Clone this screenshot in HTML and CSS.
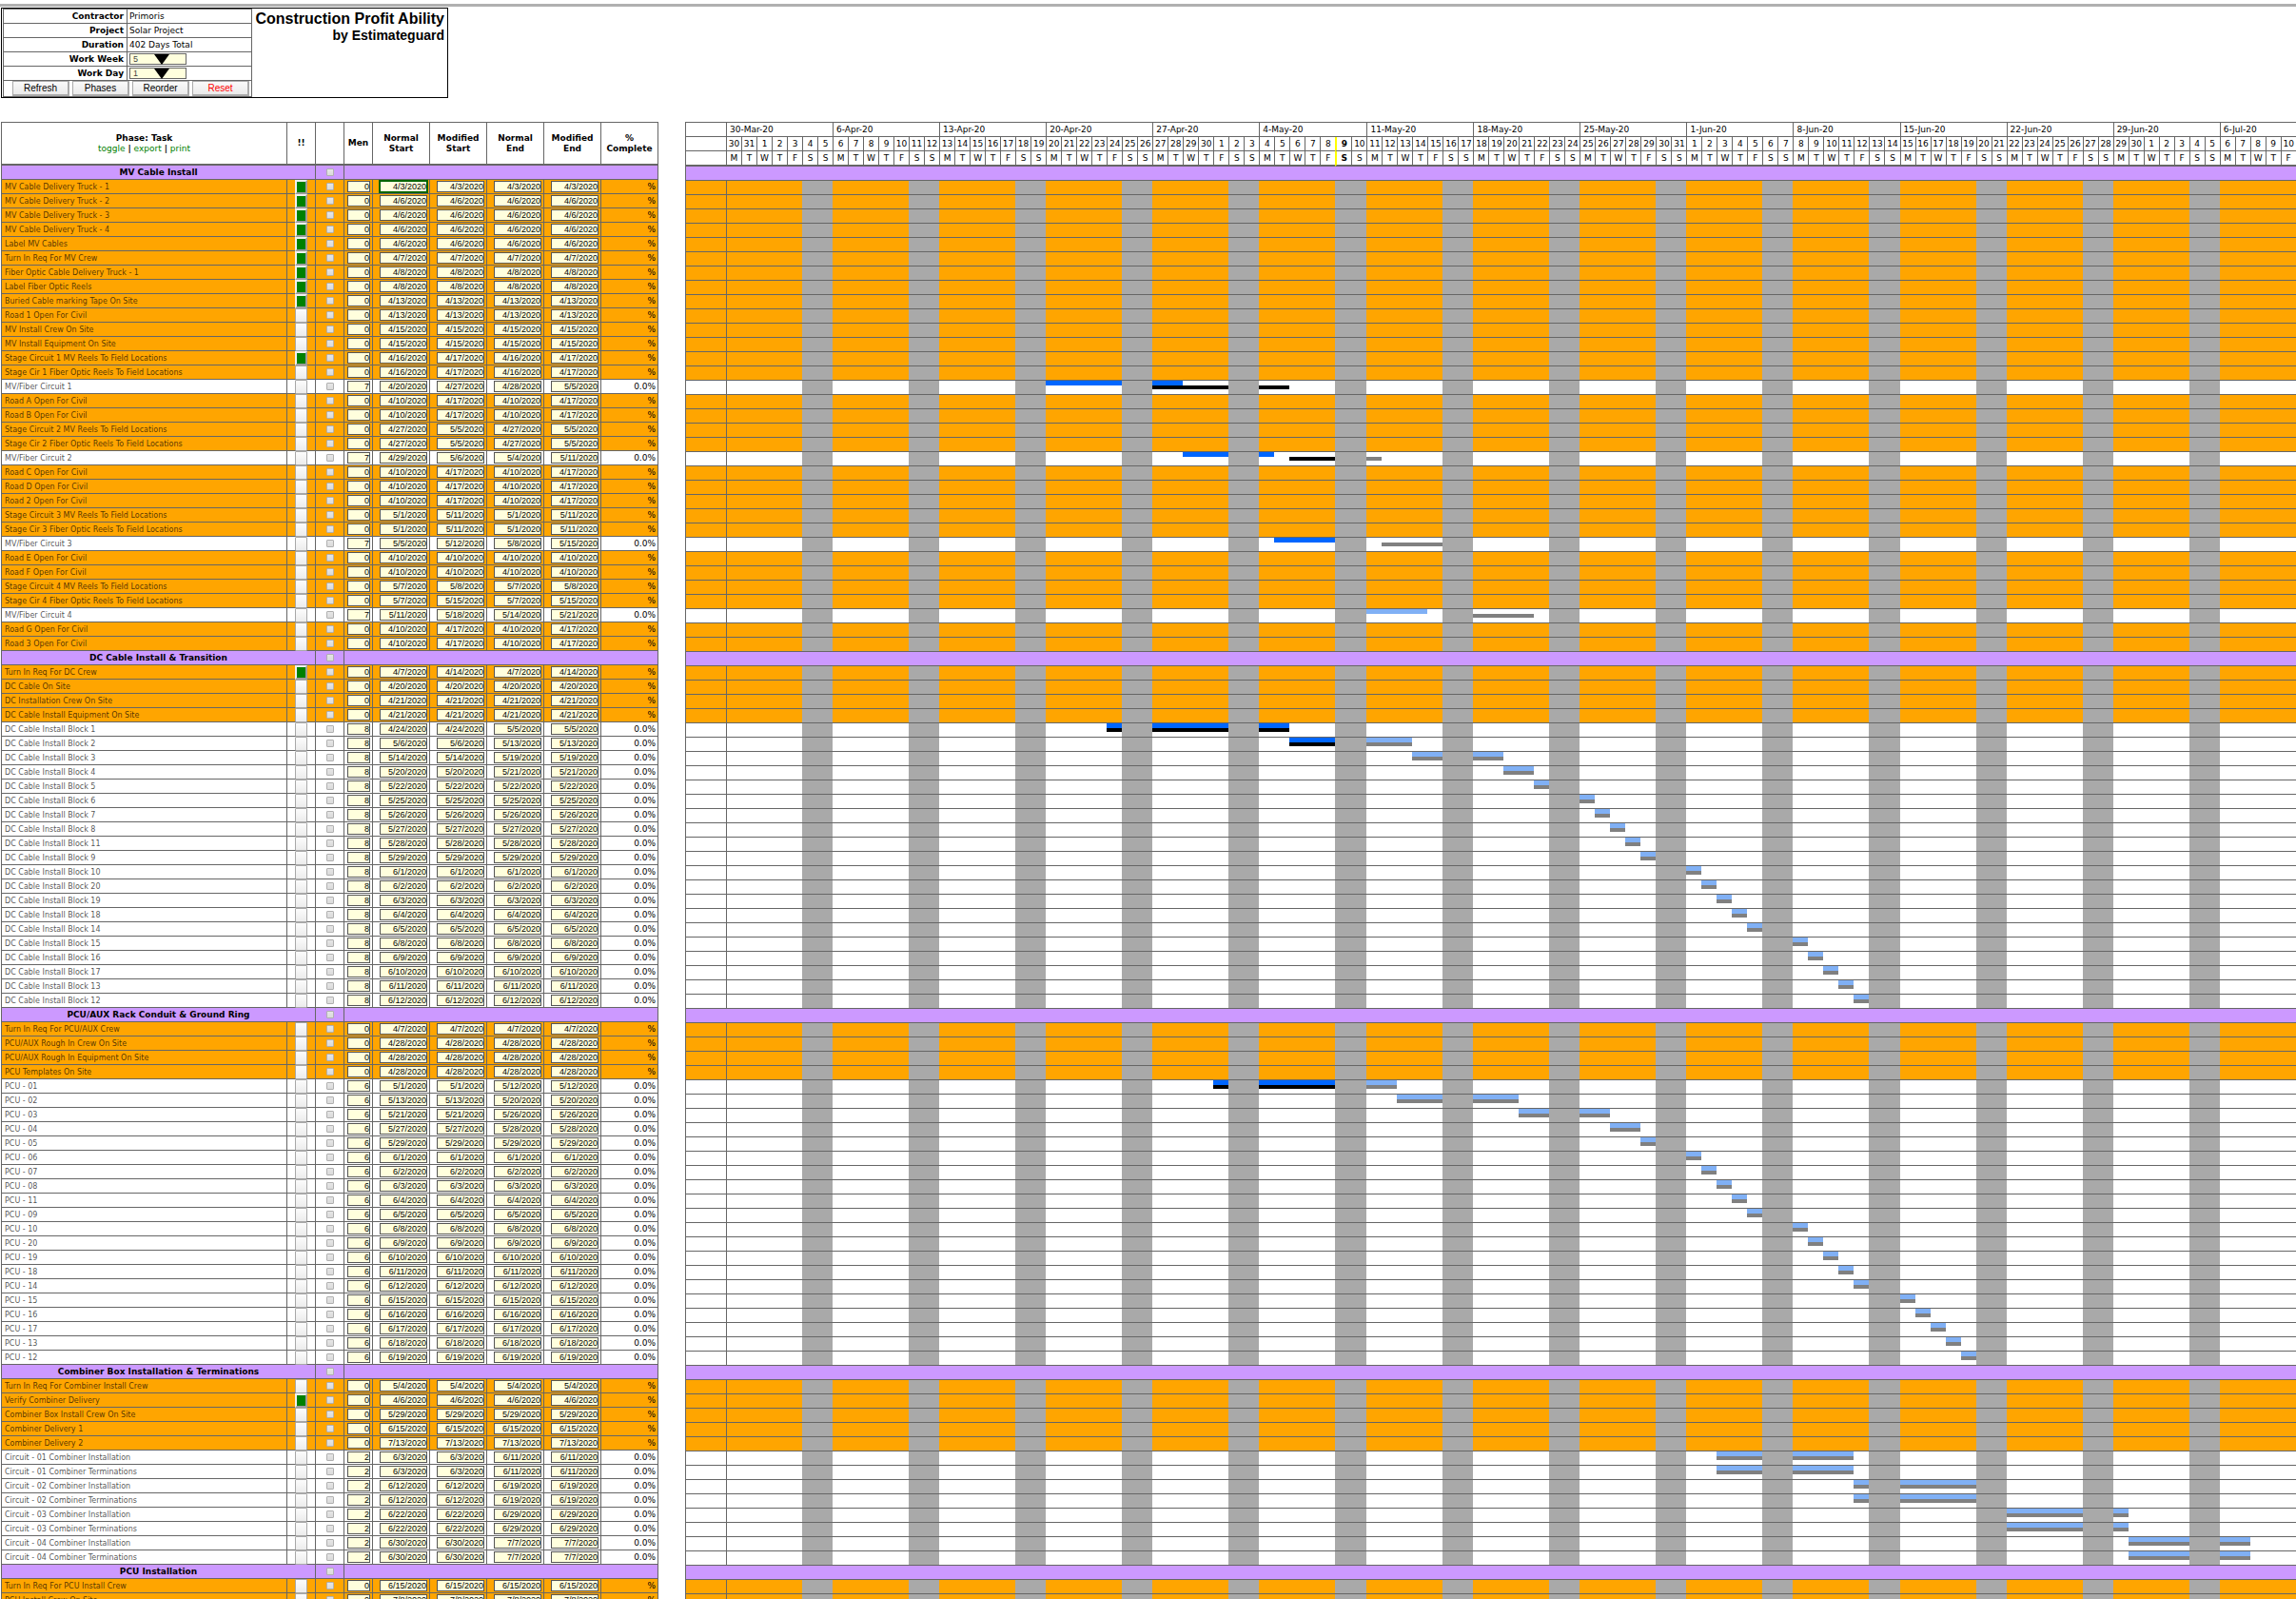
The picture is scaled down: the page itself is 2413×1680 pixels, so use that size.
FILE: index.html
```html
<!DOCTYPE html>
<html lang="en">
<head>
<meta charset="utf-8">
<title>Construction Profit Ability by Estimateguard</title>
<link rel="stylesheet" href="styles.css">
</head>
<body>
<header class="summary">
  <table class="project">
    <tbody>
      <tr><th scope="row">Contractor</th><td>Primoris</td></tr>
      <tr><th scope="row">Project</th><td>Solar Project</td></tr>
      <tr><th scope="row">Duration</th><td>402 Days Total</td></tr>
      <tr><th scope="row"><label for="week">Work Week</label></th><td><span class="picker"><select id="week"><option>5</option><option>6</option><option>7</option></select></span></td></tr>
      <tr><th scope="row"><label for="day">Work Day</label></th><td><span class="picker"><select id="day"><option>1</option><option>2</option></select></span></td></tr>
      <tr class="actions"><td colspan="2"><div class="buttons">
        <button type="button">Refresh</button>
        <button type="button">Phases</button>
        <button type="button">Reorder</button>
        <button type="button" class="danger">Reset</button>
      </div></td></tr>
    </tbody>
  </table>
  <div class="brand">
    <h1>Construction Profit Ability</h1>
    <p>by Estimateguard</p>
  </div>
</header>
<main class="schedule">
  <table class="tasks">
    <colgroup><col class="c-task"><col class="c-small"><col class="c-small"><col class="c-small"><col class="c-date"><col class="c-date"><col class="c-date"><col class="c-date"><col class="c-date"></colgroup>
    <thead>
      <tr>
        <th scope="col">Phase: Task<br><span class="links"><a href="#toggle">toggle</a> <b>|</b> <a href="#export">export</a> <b>|</b> <a href="#print">print</a></span></th>
        <th scope="col">!!</th>
        <td></td>
        <th scope="col">Men</th>
        <th scope="col">Normal<br>Start</th>
        <th scope="col">Modified<br>Start</th>
        <th scope="col">Normal<br>End</th>
        <th scope="col">Modified<br>End</th>
        <th scope="col">%<br>Complete</th>
      </tr>
    </thead>
    <tbody id="task-rows"></tbody>
  </table>
  <div class="chart">
    <table class="gantt" id="gantt"></table>
  </div>
</main>
<script src="schedule.js"></script>
</body>
</html>
```
FILE: styles.css
```css
* { box-sizing: border-box; }

html, body { height: 100%; }

body {
  margin: 0;
  overflow: hidden;
  background: #fff;
  color: #000;
  font: 9px/11px "DejaVu Sans", Verdana, sans-serif;
}

body::before {
  content: "";
  display: block;
  height: 3px;
  margin: 4px 0 1px;
  background: #b0b0b0;
}

table { border-collapse: separate; border-spacing: 0; table-layout: fixed; }
th, td { padding: 0; overflow: hidden; white-space: nowrap; }

/* Project summary */
.summary {
  display: flex;
  justify-content: space-between;
  width: 470px;
  margin: 0 0 25px 1px;
  padding: 0 3px 0 1px;
  border: 1px solid #000;
}
.project { width: 262px; border: 1px solid #666; border-bottom: 0; }
.project th, .project td { height: 15px; border-bottom: 1px solid #666; }
.project th { width: 130px; padding-right: 3px; text-align: right; border-right: 1px solid #666; }
.project td { padding-left: 2px; }
.project .actions td { height: 17px; padding: 0 2px 0 0; }
.buttons { display: flex; justify-content: flex-end; gap: 3px; }
.buttons button {
  width: 60px;
  height: 16px;
  padding: 0;
  border: 1px solid #aaa;
  border-width: 1px 2px 2px 1px;
  background: linear-gradient(#fafafa, #eaeaea);
  color: #000;
  font: 10px/12px "Liberation Sans", Arial, sans-serif;
}
.buttons .danger { color: #f00; }

.picker { display: block; position: relative; width: 60px; height: 12px; }
.picker select {
  display: block;
  appearance: none;
  width: 60px;
  height: 12px;
  margin: 0;
  padding: 0 0 0 3px;
  border: 1px solid #666;
  border-radius: 0;
  background: #ffffdd;
  color: #444;
  font: 9px/10px "Liberation Sans", Arial, sans-serif;
}
.picker::after {
  content: "";
  position: absolute;
  top: 1px;
  left: 26px;
  width: 16px;
  height: 11px;
  background: #000;
  clip-path: polygon(0 0, 100% 0, 50% 100%);
  pointer-events: none;
}

.brand { padding-top: 2px; text-align: right; font-family: "Liberation Sans", Arial, sans-serif; }
.brand h1 { margin: 0; font-size: 16px; line-height: 18px; }
.brand p { margin: 0; font-size: 14px; line-height: 16px; font-weight: bold; }

/* Task table */
.schedule { display: flex; align-items: flex-start; gap: 28px; margin-left: 1px; }
.tasks { flex: none; width: 691px; border-top: 1px solid #666; border-left: 1px solid #666; }
.c-task { width: 300px; }
.c-small { width: 30px; }
.c-date { width: 60px; }
.tasks th, .tasks td { height: 15px; border-right: 1px solid #666; border-bottom: 1px solid #666; }
.tasks thead th, .tasks thead td { height: 45px; border-bottom-width: 2px; }
.links { font-weight: normal; }
.links a { color: #008000; text-decoration: none; }

.phase th, .phase td { background: #cc99ff; }
.phase th { text-align: center; }
.milestone th, .milestone td { background: #ffa500; }
.tasks .name {
  padding-left: 3px;
  color: rgba(0, 0, 0, 0.7);
  font-size: 8px;
  font-weight: normal;
  text-align: left;
}
.tasks .percent { padding-right: 2px; text-align: right; }
.tasks .flag-cell { overflow: visible; vertical-align: top; }
.flag {
  display: block;
  width: 13px;
  height: 15px;
  margin: 0 auto -1px;
  padding: 0;
  border: 1px solid #a8a8a8;
  border-radius: 1px;
  background: linear-gradient(#fcfcfc, #ececec);
}
.flag.done { border: 2px outset #f0f0f0; border-radius: 0; background: #008000; }

.tasks input { display: block; }
.tasks input[type="checkbox"] {
  appearance: none;
  width: 8px;
  height: 8px;
  margin: 0 auto;
  border: 1px solid #b0b0b0;
  border-radius: 1px;
  background: linear-gradient(#e6e6e6, #dadada);
}
.tasks input[type="text"] {
  width: 50px;
  height: 12px;
  margin: 0 2px 0 auto;
  padding: 0;
  border: 1px solid #555;
  background: #ffffdd;
  color: #000;
  font: 9px/10px "Liberation Sans", Arial, sans-serif;
  text-align: right;
}
.tasks input.men { width: 24px; }
.tasks input.current { outline: 2px solid #006400; outline-offset: -1px; }

/* Calendar chart */
.chart { flex: 1; min-width: 0; overflow: hidden; }
.gantt { border-top: 1px solid #666; border-left: 1px solid #666; }
.gantt .c-lead { width: 42px; }
.gantt .c-day { width: 16px; }
.gantt .c-today { width: 17px; }
.gantt th, .gantt td { height: 15px; border-bottom: 1px solid #666; }
.gantt th { border-left: 1px solid #666; font-weight: normal; text-align: center; }
.gantt th.week { padding-left: 3px; text-align: left; }
.gantt .weekdays th, .gantt .weekdays td { height: 16px; border-bottom-width: 2px; }
.gantt th.today { border-left: 2px solid #ff0; font-weight: bold; }
.gantt .first { border-left: 1px solid #666; }
.gantt td.off { background: #a9a9a9; }
.gantt td.run { vertical-align: top; }
.bar { display: block; height: 4px; }
.bar.normal { height: 5px; }
.bar.normal.past { background: #0066ff; }
.bar.normal.ahead { background: #80b0f5; }
.bar.modified.past { background: #000; }
.bar.modified.ahead { background: #808080; }
```
FILE: schedule.js
```js
// One task per line: name | men | normal start | modified start | normal end | modified end | done.
// A line starting with "#" opens a phase. Tasks without men are milestones.
const plan = `
# MV Cable Install
MV Cable Delivery Truck - 1|0|4/3|4/3|4/3|4/3|x
MV Cable Delivery Truck - 2|0|4/6|4/6|4/6|4/6|x
MV Cable Delivery Truck - 3|0|4/6|4/6|4/6|4/6|x
MV Cable Delivery Truck - 4|0|4/6|4/6|4/6|4/6|x
Label MV Cables|0|4/6|4/6|4/6|4/6|x
Turn In Req For MV Crew|0|4/7|4/7|4/7|4/7|x
Fiber Optic Cable Delivery Truck - 1|0|4/8|4/8|4/8|4/8|x
Label Fiber Optic Reels|0|4/8|4/8|4/8|4/8|x
Buried Cable marking Tape On Site|0|4/13|4/13|4/13|4/13|x
Road 1 Open For Civil|0|4/13|4/13|4/13|4/13
MV Install Crew On Site|0|4/15|4/15|4/15|4/15
MV Install Equipment On Site|0|4/15|4/15|4/15|4/15
Stage Circuit 1 MV Reels To Field Locations|0|4/16|4/17|4/16|4/17|x
Stage Cir 1 Fiber Optic Reels To Field Locations|0|4/16|4/17|4/16|4/17
MV/Fiber Circuit 1|7|4/20|4/27|4/28|5/5
Road A Open For Civil|0|4/10|4/17|4/10|4/17
Road B Open For Civil|0|4/10|4/17|4/10|4/17
Stage Circuit 2 MV Reels To Field Locations|0|4/27|5/5|4/27|5/5
Stage Cir 2 Fiber Optic Reels To Field Locations|0|4/27|5/5|4/27|5/5
MV/Fiber Circuit 2|7|4/29|5/6|5/4|5/11
Road C Open For Civil|0|4/10|4/17|4/10|4/17
Road D Open For Civil|0|4/10|4/17|4/10|4/17
Road 2 Open For Civil|0|4/10|4/17|4/10|4/17
Stage Circuit 3 MV Reels To Field Locations|0|5/1|5/11|5/1|5/11
Stage Cir 3 Fiber Optic Reels To Field Locations|0|5/1|5/11|5/1|5/11
MV/Fiber Circuit 3|7|5/5|5/12|5/8|5/15
Road E Open For Civil|0|4/10|4/10|4/10|4/10
Road F Open For Civil|0|4/10|4/10|4/10|4/10
Stage Circuit 4 MV Reels To Field Locations|0|5/7|5/8|5/7|5/8
Stage Cir 4 Fiber Optic Reels To Field Locations|0|5/7|5/15|5/7|5/15
MV/Fiber Circuit 4|7|5/11|5/18|5/14|5/21
Road G Open For Civil|0|4/10|4/17|4/10|4/17
Road 3 Open For Civil|0|4/10|4/17|4/10|4/17
# DC Cable Install & Transition
Turn In Req For DC Crew|0|4/7|4/14|4/7|4/14|x
DC Cable On Site|0|4/20|4/20|4/20|4/20
DC Installation Crew On Site|0|4/21|4/21|4/21|4/21
DC Cable Install Equipment On Site|0|4/21|4/21|4/21|4/21
DC Cable Install Block 1|8|4/24|4/24|5/5|5/5
DC Cable Install Block 2|8|5/6|5/6|5/13|5/13
DC Cable Install Block 3|8|5/14|5/14|5/19|5/19
DC Cable Install Block 4|8|5/20|5/20|5/21|5/21
DC Cable Install Block 5|8|5/22|5/22|5/22|5/22
DC Cable Install Block 6|8|5/25|5/25|5/25|5/25
DC Cable Install Block 7|8|5/26|5/26|5/26|5/26
DC Cable Install Block 8|8|5/27|5/27|5/27|5/27
DC Cable Install Block 11|8|5/28|5/28|5/28|5/28
DC Cable Install Block 9|8|5/29|5/29|5/29|5/29
DC Cable Install Block 10|8|6/1|6/1|6/1|6/1
DC Cable Install Block 20|8|6/2|6/2|6/2|6/2
DC Cable Install Block 19|8|6/3|6/3|6/3|6/3
DC Cable Install Block 18|8|6/4|6/4|6/4|6/4
DC Cable Install Block 14|8|6/5|6/5|6/5|6/5
DC Cable Install Block 15|8|6/8|6/8|6/8|6/8
DC Cable Install Block 16|8|6/9|6/9|6/9|6/9
DC Cable Install Block 17|8|6/10|6/10|6/10|6/10
DC Cable Install Block 13|8|6/11|6/11|6/11|6/11
DC Cable Install Block 12|8|6/12|6/12|6/12|6/12
# PCU/AUX Rack Conduit & Ground Ring
Turn In Req For PCU/AUX Crew|0|4/7|4/7|4/7|4/7
PCU/AUX Rough In Crew On Site|0|4/28|4/28|4/28|4/28
PCU/AUX Rough In Equipment On Site|0|4/28|4/28|4/28|4/28
PCU Templates On Site|0|4/28|4/28|4/28|4/28
PCU - 01|6|5/1|5/1|5/12|5/12
PCU - 02|6|5/13|5/13|5/20|5/20
PCU - 03|6|5/21|5/21|5/26|5/26
PCU - 04|6|5/27|5/27|5/28|5/28
PCU - 05|6|5/29|5/29|5/29|5/29
PCU - 06|6|6/1|6/1|6/1|6/1
PCU - 07|6|6/2|6/2|6/2|6/2
PCU - 08|6|6/3|6/3|6/3|6/3
PCU - 11|6|6/4|6/4|6/4|6/4
PCU - 09|6|6/5|6/5|6/5|6/5
PCU - 10|6|6/8|6/8|6/8|6/8
PCU - 20|6|6/9|6/9|6/9|6/9
PCU - 19|6|6/10|6/10|6/10|6/10
PCU - 18|6|6/11|6/11|6/11|6/11
PCU - 14|6|6/12|6/12|6/12|6/12
PCU - 15|6|6/15|6/15|6/15|6/15
PCU - 16|6|6/16|6/16|6/16|6/16
PCU - 17|6|6/17|6/17|6/17|6/17
PCU - 13|6|6/18|6/18|6/18|6/18
PCU - 12|6|6/19|6/19|6/19|6/19
# Combiner Box Installation & Terminations
Turn In Req For Combiner Install Crew|0|5/4|5/4|5/4|5/4
Verify Combiner Delivery|0|4/6|4/6|4/6|4/6|x
Combiner Box Install Crew On Site|0|5/29|5/29|5/29|5/29
Combiner Delivery 1|0|6/15|6/15|6/15|6/15
Combiner Delivery 2|0|7/13|7/13|7/13|7/13
Circuit - 01 Combiner Installation|2|6/3|6/3|6/11|6/11
Circuit - 01 Combiner Terminations|2|6/3|6/3|6/11|6/11
Circuit - 02 Combiner Installation|2|6/12|6/12|6/19|6/19
Circuit - 02 Combiner Terminations|2|6/12|6/12|6/19|6/19
Circuit - 03 Combiner Installation|2|6/22|6/22|6/29|6/29
Circuit - 03 Combiner Terminations|2|6/22|6/22|6/29|6/29
Circuit - 04 Combiner Installation|2|6/30|6/30|7/7|7/7
Circuit - 04 Combiner Terminations|2|6/30|6/30|7/7|7/7
# PCU Installation
Turn In Req For PCU Install Crew|0|6/15|6/15|6/15|6/15
PCU Install Crew On Site|0|7/8|7/8|7/8|7/8
`.trim().split("\n");

const YEAR = 2020;
const DAY_MS = 86400000;
const FIRST_DAY = Date.UTC(YEAR, 2, 30);
const DAY_COUNT = 105;
const MONTHS = ["Jan", "Feb", "Mar", "Apr", "May", "Jun", "Jul"];
const LETTERS = "MTWTFSS";

const dayIndex = (text) => {
  const [month, day] = text.split("/").map(Number);
  return (Date.UTC(YEAR, month - 1, day) - FIRST_DAY) / DAY_MS;
};
const TODAY = dayIndex("5/9");
const isOff = (day) => day % 7 > 4;
const escape = (text) => text.replace("&", "&amp;");

const tasks = plan.map((line) => {
  if (line.startsWith("#")) return { phase: escape(line.slice(2)) };
  const [name, men, normalStart, modifiedStart, normalEnd, modifiedEnd, done] = line.split("|");
  return { name, men: Number(men), dates: [normalStart, modifiedStart, normalEnd, modifiedEnd], done: Boolean(done) };
});

const dateLabels = ["normal start", "modified start", "normal end", "modified end"];

function taskRow(task, index) {
  if (task.phase) {
    return `<tr class="phase"><th colspan="2" scope="rowgroup">${task.phase}</th>
      <td><input type="checkbox" aria-label="Select phase ${task.phase}"></td><td colspan="6"></td></tr>`;
  }
  const dates = task.dates.map((date, i) => {
    const current = index === 1 && i === 0 ? ' class="current"' : "";
    return `<td><input type="text"${current} value="${date}/${YEAR}" aria-label="${task.name} ${dateLabels[i]}"></td>`;
  }).join("");
  return `<tr class="${task.men ? "work" : "milestone"}"><th scope="row" class="name">${task.name}</th>
    <td class="flag-cell"><button type="button" class="flag${task.done ? " done" : ""}" aria-label="Flag ${task.name}"></button></td>
    <td><input type="checkbox" aria-label="Select ${task.name}"></td>
    <td><input type="text" class="men" value="${task.men}" aria-label="${task.name} men"></td>${dates}
    <td class="percent">${task.men ? "0.0%" : "%"}</td></tr>`;
}

function barState(task, day) {
  if (isOff(day)) return "off";
  if (!task.men) return "";
  const [ns, ms, ne, me] = task.dates.map(dayIndex);
  const normal = day >= ns && day <= ne;
  const modified = day >= ms && day <= me;
  if (!normal && !modified) return "";
  return `${normal ? "n" : "-"}${modified ? "m" : "-"}${day < TODAY ? "past" : "ahead"}`;
}

function ganttCell(state, span, start) {
  const first = start === 0 ? " first" : "";
  if (state === "off" || state === "") return `<td class="${state}${first}" colspan="${span}"></td>`;
  const time = state.slice(2);
  const normal = `<span class="bar normal${state[0] === "n" ? " " + time : ""}"></span>`;
  const modified = `<span class="bar modified${state[1] === "m" ? " " + time : ""}"></span>`;
  return `<td class="run${first}" colspan="${span}">${normal}${modified}</td>`;
}

function ganttRow(task) {
  if (task.phase) return `<tr class="phase"><td colspan="${DAY_COUNT + 1}"></td></tr>`;
  let cells = "";
  let start = 0;
  for (let day = 1; day <= DAY_COUNT; day++) {
    const state = barState(task, start);
    if (day === DAY_COUNT || barState(task, day) !== state) {
      cells += ganttCell(state, day - start, start);
      start = day;
    }
  }
  return `<tr class="${task.men ? "work" : "milestone"}"><td></td>${cells}</tr>`;
}

function ganttHead() {
  let cols = '<col class="c-lead">';
  let weeks = "";
  let numbers = "";
  let letters = "";
  for (let day = 0; day < DAY_COUNT; day++) {
    const date = new Date(FIRST_DAY + day * DAY_MS);
    const today = day === TODAY ? ' class="today"' : "";
    cols += `<col class="${today ? "c-today" : "c-day"}">`;
    if (day % 7 === 0) {
      weeks += `<th class="week" colspan="7">${date.getUTCDate()}-${MONTHS[date.getUTCMonth()]}-20</th>`;
    }
    numbers += `<th${today}>${date.getUTCDate()}</th>`;
    letters += `<th${today}>${LETTERS[day % 7]}</th>`;
  }
  return `<colgroup>${cols}</colgroup><thead><tr><td></td>${weeks}</tr>
    <tr><td></td>${numbers}</tr><tr class="weekdays"><td></td>${letters}</tr></thead>`;
}

const gantt = document.getElementById("gantt");
gantt.style.width = `${43 + DAY_COUNT * 16 + 1}px`;
gantt.innerHTML = `${ganttHead()}<tbody>${tasks.map(ganttRow).join("")}</tbody>`;
document.getElementById("task-rows").innerHTML = tasks.map(taskRow).join("");
```
